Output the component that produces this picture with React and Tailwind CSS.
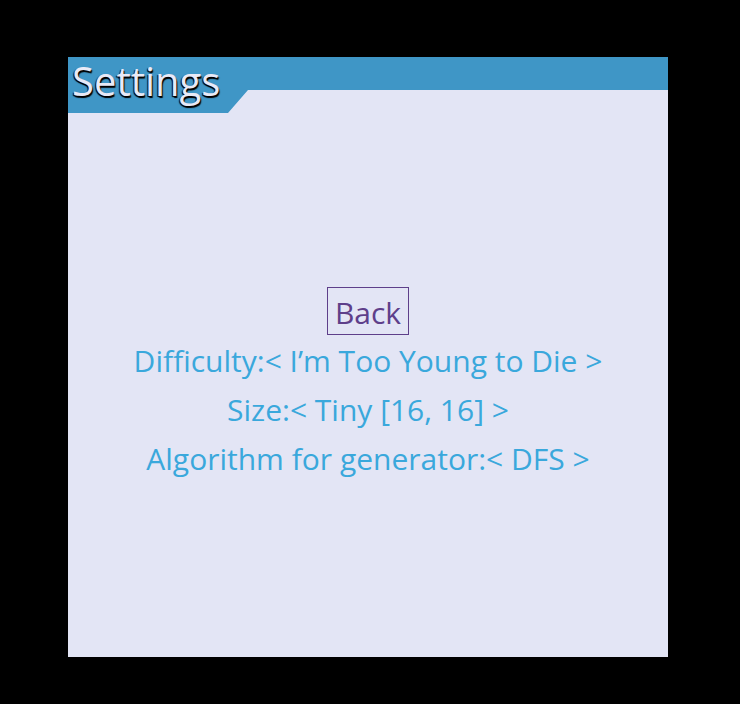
export default function App() {
  return (
    <div className="w-[740px] h-[704px] bg-black pt-[57px] pl-[68px]" style={{ fontFamily: '"Open Sans", sans-serif' }}>
      <div className="w-[600px] h-[600px] bg-[#e3e5f5] flex flex-col">
        <div className="h-[56px] w-full bg-[#3f96c6] [clip-path:polygon(0_0,100%_0,100%_33px,180px_33px,160px_56px,0_56px)] flex items-start">
          <span className="text-[40px] leading-none text-[#e8eaf7] pl-[4px] pt-[4px] [text-shadow:-1px_1px_1px_#000,1px_2px_1px_#000]">Settings</span>
        </div>
        <div className="flex-1 flex flex-col items-center justify-center text-[30px] leading-[49px] text-[#3aa8dc]">
          <button className="border border-[#5e3f8a] text-[#5e3f8a] px-[7px] h-[48px] leading-[50px] mb-[1px]">Back</button>
          <div>Difficulty:&lt; I’m Too Young to Die &gt;</div>
          <div>Size:&lt; Tiny [16, 16] &gt;</div>
          <div>Algorithm for generator:&lt; DFS &gt;</div>
        </div>
      </div>
    </div>
  );
}
